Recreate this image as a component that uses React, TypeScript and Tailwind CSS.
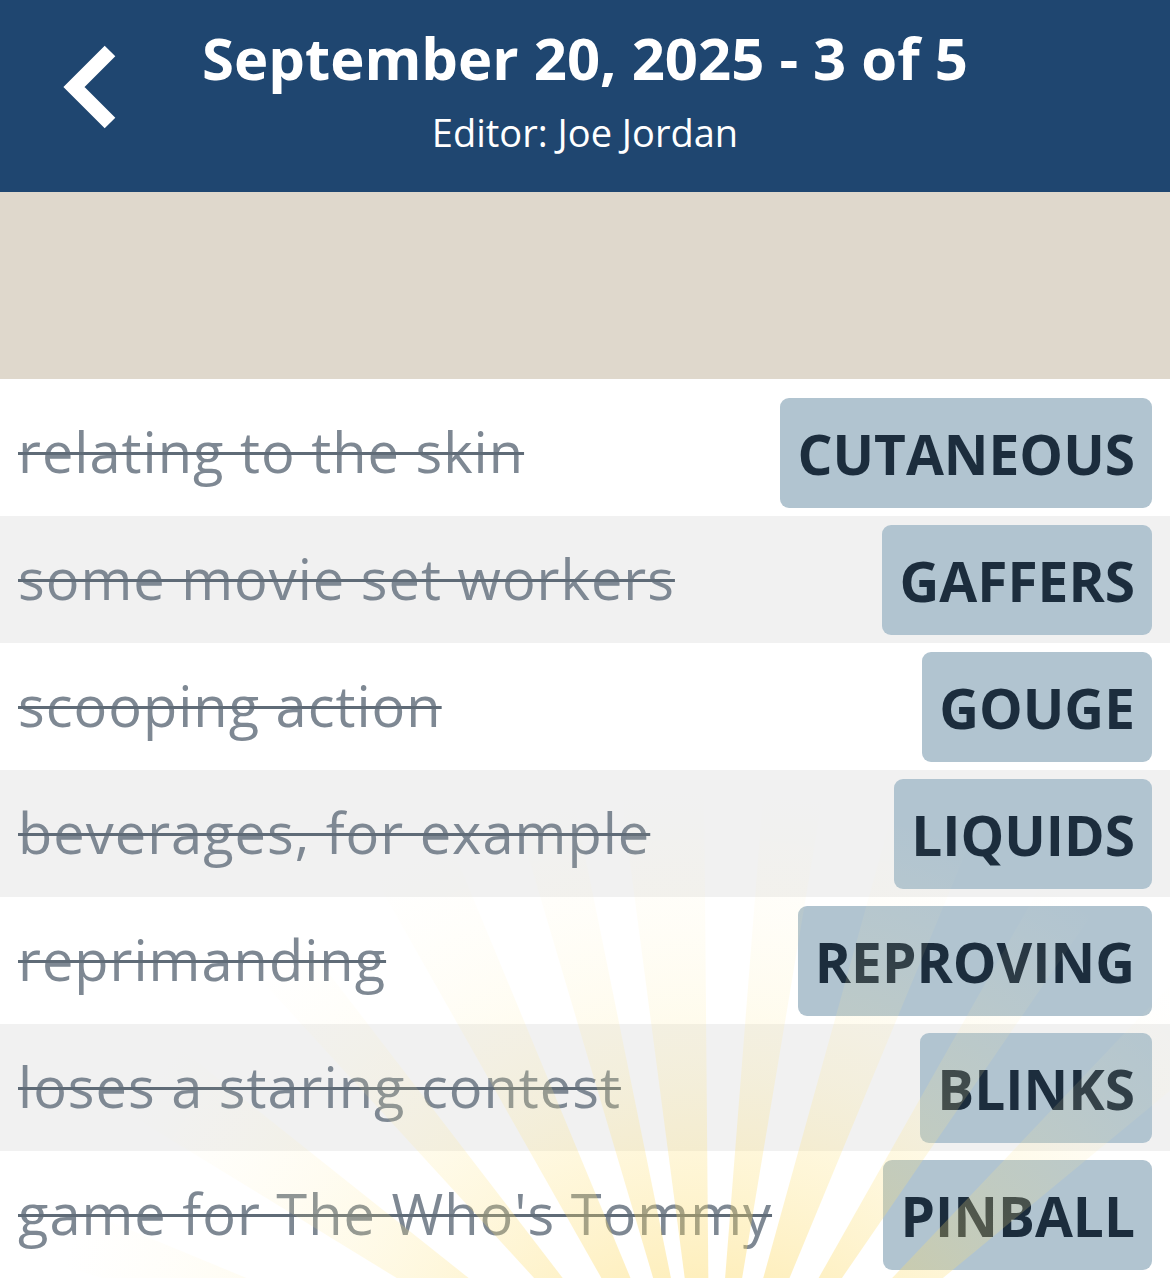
import React from "react"

interface Entry {
  clue: string
  answer: string
}

const entries: Entry[] = [
  { clue: "relating to the skin", answer: "CUTANEOUS" },
  { clue: "some movie set workers", answer: "GAFFERS" },
  { clue: "scooping action", answer: "GOUGE" },
  { clue: "beverages, for example", answer: "LIQUIDS" },
  { clue: "reprimanding", answer: "REPROVING" },
  { clue: "loses a staring contest", answer: "BLINKS" },
  { clue: "game for The Who's Tommy", answer: "PINBALL" },
]

const font = { fontFamily: "'Open Sans', 'Noto Sans', sans-serif" }

// faint sunburst drawn over the lower rows
function Sunburst() {
  const cx = 710
  const cy = 1470
  const rays = [-70, -55, -40, -26, -14, -4, 7, 19, 32, 47]
  return (
    <svg
      className="pointer-events-none absolute left-0 top-0"
      width="1170"
      height="1278"
      viewBox="0 0 1170 1278"
    >
      <defs>
        <radialGradient id="glow" cx={cx} cy={cy} r="680" gradientUnits="userSpaceOnUse">
          <stop offset="0.25" stopColor="#fcd34d" stopOpacity="0.4" />
          <stop offset="0.6" stopColor="#fde68a" stopOpacity="0.2" />
          <stop offset="1" stopColor="#fef3c7" stopOpacity="0" />
        </radialGradient>
      </defs>
      {rays.map((a, i) => {
        const w = i % 2 === 0 ? 5 : 7
        const r = 760
        const a1 = ((a - w / 2 - 90) * Math.PI) / 180
        const a2 = ((a + w / 2 - 90) * Math.PI) / 180
        const p1 = `${cx + r * Math.cos(a1)},${cy + r * Math.sin(a1)}`
        const p2 = `${cx + r * Math.cos(a2)},${cy + r * Math.sin(a2)}`
        return <polygon key={a} points={`${cx},${cy} ${p1} ${p2}`} fill="url(#glow)" />
      })}
    </svg>
  )
}

export default function App() {
  return (
    <div className="relative h-[1278px] w-[1170px] overflow-hidden bg-white" style={font}>
      <header className="relative flex h-[192px] flex-col items-center bg-[#1f4670] pt-[20px] text-white">
        <button className="absolute left-[58px] top-[42px] flex h-[90px] w-[64px] items-center justify-center">
          <svg width="60" height="88" viewBox="0 0 60 88">
            <path d="M50 8 L14 44 L50 80" fill="none" stroke="white" strokeWidth="15" strokeLinejoin="miter" />
          </svg>
        </button>
        <h1 className="text-[58px] font-bold leading-[76px]">September 20, 2025 - 3 of 5</h1>
        <p className="mt-[13px] text-[38px] leading-[46px]">Editor: Joe Jordan</p>
      </header>

      <div className="h-[187px] bg-[#dfd8cc]" />

      <div className="pt-[10px]">
        {entries.map((e, i) => (
          <div
            key={e.answer}
            className={`flex h-[127px] items-start justify-between pl-[18px] pr-[18px] pt-[9px] ${i % 2 === 1 ? "bg-[#f1f1f1]" : "bg-white"}`}
          >
            <span className="mt-[21px] text-[56px] leading-[64px] tracking-[1px] text-[#7e8893] line-through decoration-[#5f6b77] decoration-[3px]">
              {e.clue}
            </span>
            <span className="flex h-[110px] items-center rounded-[9px] bg-[#b1c4d0] px-[17px] text-[55px] font-bold leading-none text-[#1c2d3d]">
              {e.answer}
            </span>
          </div>
        ))}
      </div>

      <Sunburst />
    </div>
  )
}
